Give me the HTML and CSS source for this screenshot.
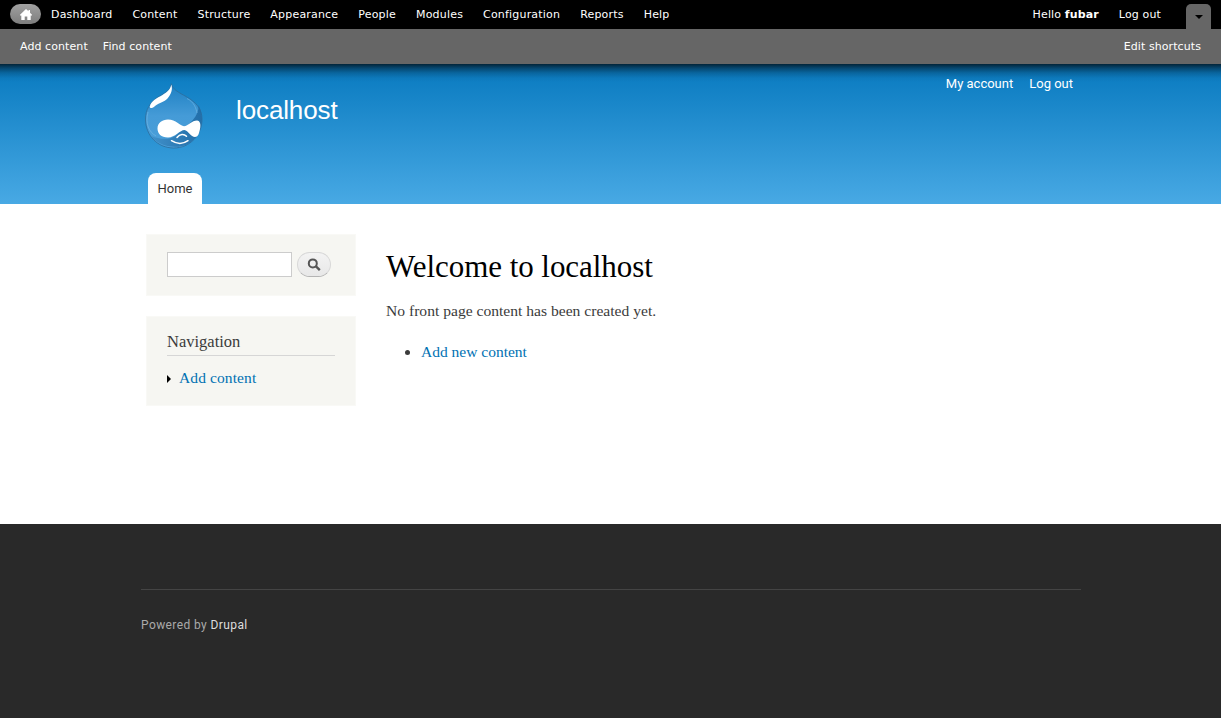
FILE: index.html
```html
<!DOCTYPE html>
<html lang="en">
<head>
<meta charset="utf-8">
<title>Welcome to localhost | localhost</title>
<link rel="stylesheet" href="styles.css">
</head>
<body>
<div class="toolbar">
  <div class="toolbar-menu">
    <a class="home" href="#" aria-label="Home"><svg width="12" height="11" viewBox="0 0 12 11"><path fill="#fff" d="M6 0 L8.5 2.3 V1 H10 V3.7 L12 5.7 V6.5 H10.7 V11 H7.3 V7.5 H4.7 V11 H1.3 V6.5 H0 V5.7 Z"/></svg></a>
    <nav class="menu">
      <a href="#">Dashboard</a><a href="#">Content</a><a href="#">Structure</a><a href="#">Appearance</a><a href="#">People</a><a href="#">Modules</a><a href="#">Configuration</a><a href="#">Reports</a><a href="#">Help</a>
    </nav>
    <div class="user"><a href="#">Hello <strong>fubar</strong></a><a href="#">Log out</a></div>
    <a class="toggle" href="#" aria-label="Toggle shortcuts"><svg width="8" height="4" viewBox="0 0 8 4"><path d="M0 0H8L4 4Z"/></svg></a>
  </div>
  <div class="drawer"><a href="#">Add content</a><a href="#">Find content</a><a class="edit" href="#">Edit shortcuts</a></div>
</div>
<header class="header">
  <div class="header-inner">
    <svg class="logo" width="60" height="66" viewBox="0 0 60 66">
      <defs>
        <linearGradient id="drop" x1="0" y1="0" x2="0" y2="1"><stop offset="0" stop-color="#1c7fc2"/><stop offset=".5" stop-color="#459bd7"/><stop offset="1" stop-color="#4a9fd9"/></linearGradient>
        <linearGradient id="shade" x1="0" y1="0" x2="1" y2="0"><stop offset="0" stop-color="#3f8fc8"/><stop offset=".6" stop-color="#2a76b0"/><stop offset="1" stop-color="#1f6aa4"/></linearGradient>
      </defs>
      <path fill="url(#drop)" stroke="#2c6c9c" stroke-width=".8" d="M27.3 .8 C29 7 35 9.5 42 13.5 C52 19 58 26 58 36 C58 52 46 65 29.8 65 C14 65 1.5 53 1.5 36 C1.5 27 6 19 14 14 C21 10 27 7 27.3 .8Z"/>
      <path fill="url(#shade)" opacity=".9" d="M54.5 22 C62 36 57 55 43 61.5 C29 67.5 12 61 7 53 C16 56.5 25 57 31 53 L47 39 C52 34 55 28 54.5 22Z"/>
      <path fill="none" stroke="#77b9e5" opacity=".6" d="M4 29 C1 41 5 49 12 53 M43 15.5 C50 19 52 25 53 30"/>
      <path fill="#fff" d="M27.3 1.5 C28.8 6 27.5 11 23.5 15.5 C20 19.5 16 19 11 23 C8.5 25.4 6 26 5.8 23.5 C7 18 13 15 18.5 12 C23.5 9 26.7 6 27.3 1.5Z"/>
      <path fill="#fff" d="M24 36.5 C32 36.5 36 42.8 40 43.3 C44 43 48 37.5 53 37.5 C56.3 37.5 57 42 56 46 C55 51 54 54 51 54 C47 54 44 47.5 40.5 47 C36 47 31 54.5 24 54.5 C17 54.5 13.5 50.5 13.5 45.5 C13.5 40 18 36.5 24 36.5Z"/>
      <path fill="none" stroke="#fff" stroke-width="1.5" stroke-linecap="round" d="M33 54.5 C36 50.6 40 50.6 42.5 53.2 M27.5 57.7 C33 61.2 39 61.2 44 57.7"/>
    </svg>
    <div class="site-name">localhost</div>
    <nav class="account"><a href="#">My account</a><a href="#">Log out</a></nav>
  </div>
  <a class="tab" href="#">Home</a>
</header>
<main class="main">
  <aside class="sidebar">
    <form class="block search"><input type="text" aria-label="Search"><button type="button" aria-label="Search"><svg width="14" height="14" viewBox="0 0 14 14" fill="none" stroke="#555"><circle cx="5.8" cy="5.4" r="4" stroke-width="2"/><path stroke-width="2.4" d="M8.7 8.2L12.8 12.2"/></svg></button></form>
    <section class="block navigation"><h2>Navigation</h2><a href="#"><svg width="4" height="8" viewBox="0 0 4 8"><path d="M0 0L4 4L0 8Z"/></svg><span>Add content</span></a></section>
  </aside>
  <section class="content"><h1>Welcome to localhost</h1><p>No front page content has been created yet.</p><ul><li><a href="#">Add new content</a></li></ul></section>
</main>
<footer class="footer"><div class="powered"><span>Powered by</span> <a href="#">Drupal</a></div></footer>
</body>
</html>
```

FILE: styles.css
```css
* { box-sizing: border-box; }
body { margin: 0; height: 718px; overflow: hidden; display: flex; flex-direction: column; background: #fff; color: #3b3b3b; font-family: "Liberation Serif", serif; }
a { color: #0071b3; text-decoration: none; }
svg { display: block; }
.toolbar { flex: none; font: 11px/15px "DejaVu Sans", sans-serif; letter-spacing: .19px; }
.toolbar a { color: #fff; white-space: nowrap; }
.toolbar-menu { display: flex; height: 29px; padding: 0 10px; background: #000; }
.home { display: flex; align-items: center; justify-content: center; width: 31px; height: 20px; margin-top: 4px; border-radius: 10px; background: linear-gradient(#a0a0a0, #7d7d7d); }
.menu { display: flex; gap: 20px; padding: 7px 0 0 10px; }
.user { display: flex; gap: 20px; margin-left: auto; padding-top: 7px; letter-spacing: .14px; }
.toggle { display: flex; align-items: center; justify-content: center; width: 25px; height: 25px; margin: 4px 0 0 25px; border-radius: 5px 5px 0 0; background: #666; }
.drawer { display: flex; gap: 15px; height: 35px; padding: 10px 20px; background: #666; letter-spacing: .08px; }
.edit { margin-left: auto; }
.header { flex: none; height: 140px; padding: 0 140px 0 141px; background: linear-gradient(rgba(0,0,0,.7), rgba(0,0,0,.43) 4px, rgba(0,0,0,.18) 9px, rgba(0,0,0,.04) 14px, transparent 18px), linear-gradient(#0779bf, #48a9e4); font-family: "Liberation Sans", sans-serif; }
.header-inner { display: flex; height: 109px; }
.logo { margin: 19px 0 0 3px; }
.site-name { margin: 31px 0 0 32px; color: #fff; font-size: 26px; line-height: 30px; letter-spacing: -.12px; }
.account { display: flex; gap: 16px; margin: 11px 8px 0 auto; font: 13px/17px Roboto, sans-serif; }
.account a { color: #fff; }
.tab { display: block; width: 54px; height: 31px; margin-left: 7px; border-radius: 8px 8px 0 0; background: #fff; color: #333; font: 13px/31px Roboto, sans-serif; text-align: center; }
.main { display: flex; gap: 30px; flex: none; height: 320px; padding: 30px 140px 0 146px; }
.sidebar { width: 210px; }
.block { background: #f6f6f2; border: 1px solid #f9f9f6; }
.search { display: flex; gap: 5px; height: 62px; margin: 0 0 20px; padding: 17px 20px; }
.search input { width: 125px; height: 25px; border: 1px solid #ccc; background: #fff; }
.search button { display: flex; align-items: center; justify-content: center; width: 34px; height: 25px; padding: 0; border: 1px solid #d8d8d8; border-bottom-color: #b4b4b4; border-radius: 12.5px; background: linear-gradient(#f3f3f3, #e8e8e8); }
.navigation { height: 90px; padding: 16px 20px; }
.navigation h2 { margin: 0 0 13px; height: 23px; border-bottom: 1px solid #d6d6d6; font-size: 16.5px; font-weight: 400; line-height: 18px; }
.navigation a { display: flex; align-items: center; gap: 8px; font-size: 15.5px; line-height: 18px; letter-spacing: .1px; }
.navigation svg { margin-top: 2px; }
.content { padding-top: 16px; }
.content h1 { margin: 0; color: #000; font-size: 31px; font-weight: 400; line-height: 34px; letter-spacing: -.05px; }
.content p { margin: 18px 0 23px; font-size: 15.6px; line-height: 18px; }
.content ul { margin: 0; padding-left: 35px; font-size: 15.5px; line-height: 18px; }
.footer { flex: 1; padding: 65px 140px 0 141px; background: #292929; }
.powered { padding-top: 26px; border-top: 1px solid #444; color: #aaa; font: 12px/18px Roboto, sans-serif; letter-spacing: .4px; }
.powered a { color: #ddd; }
```
